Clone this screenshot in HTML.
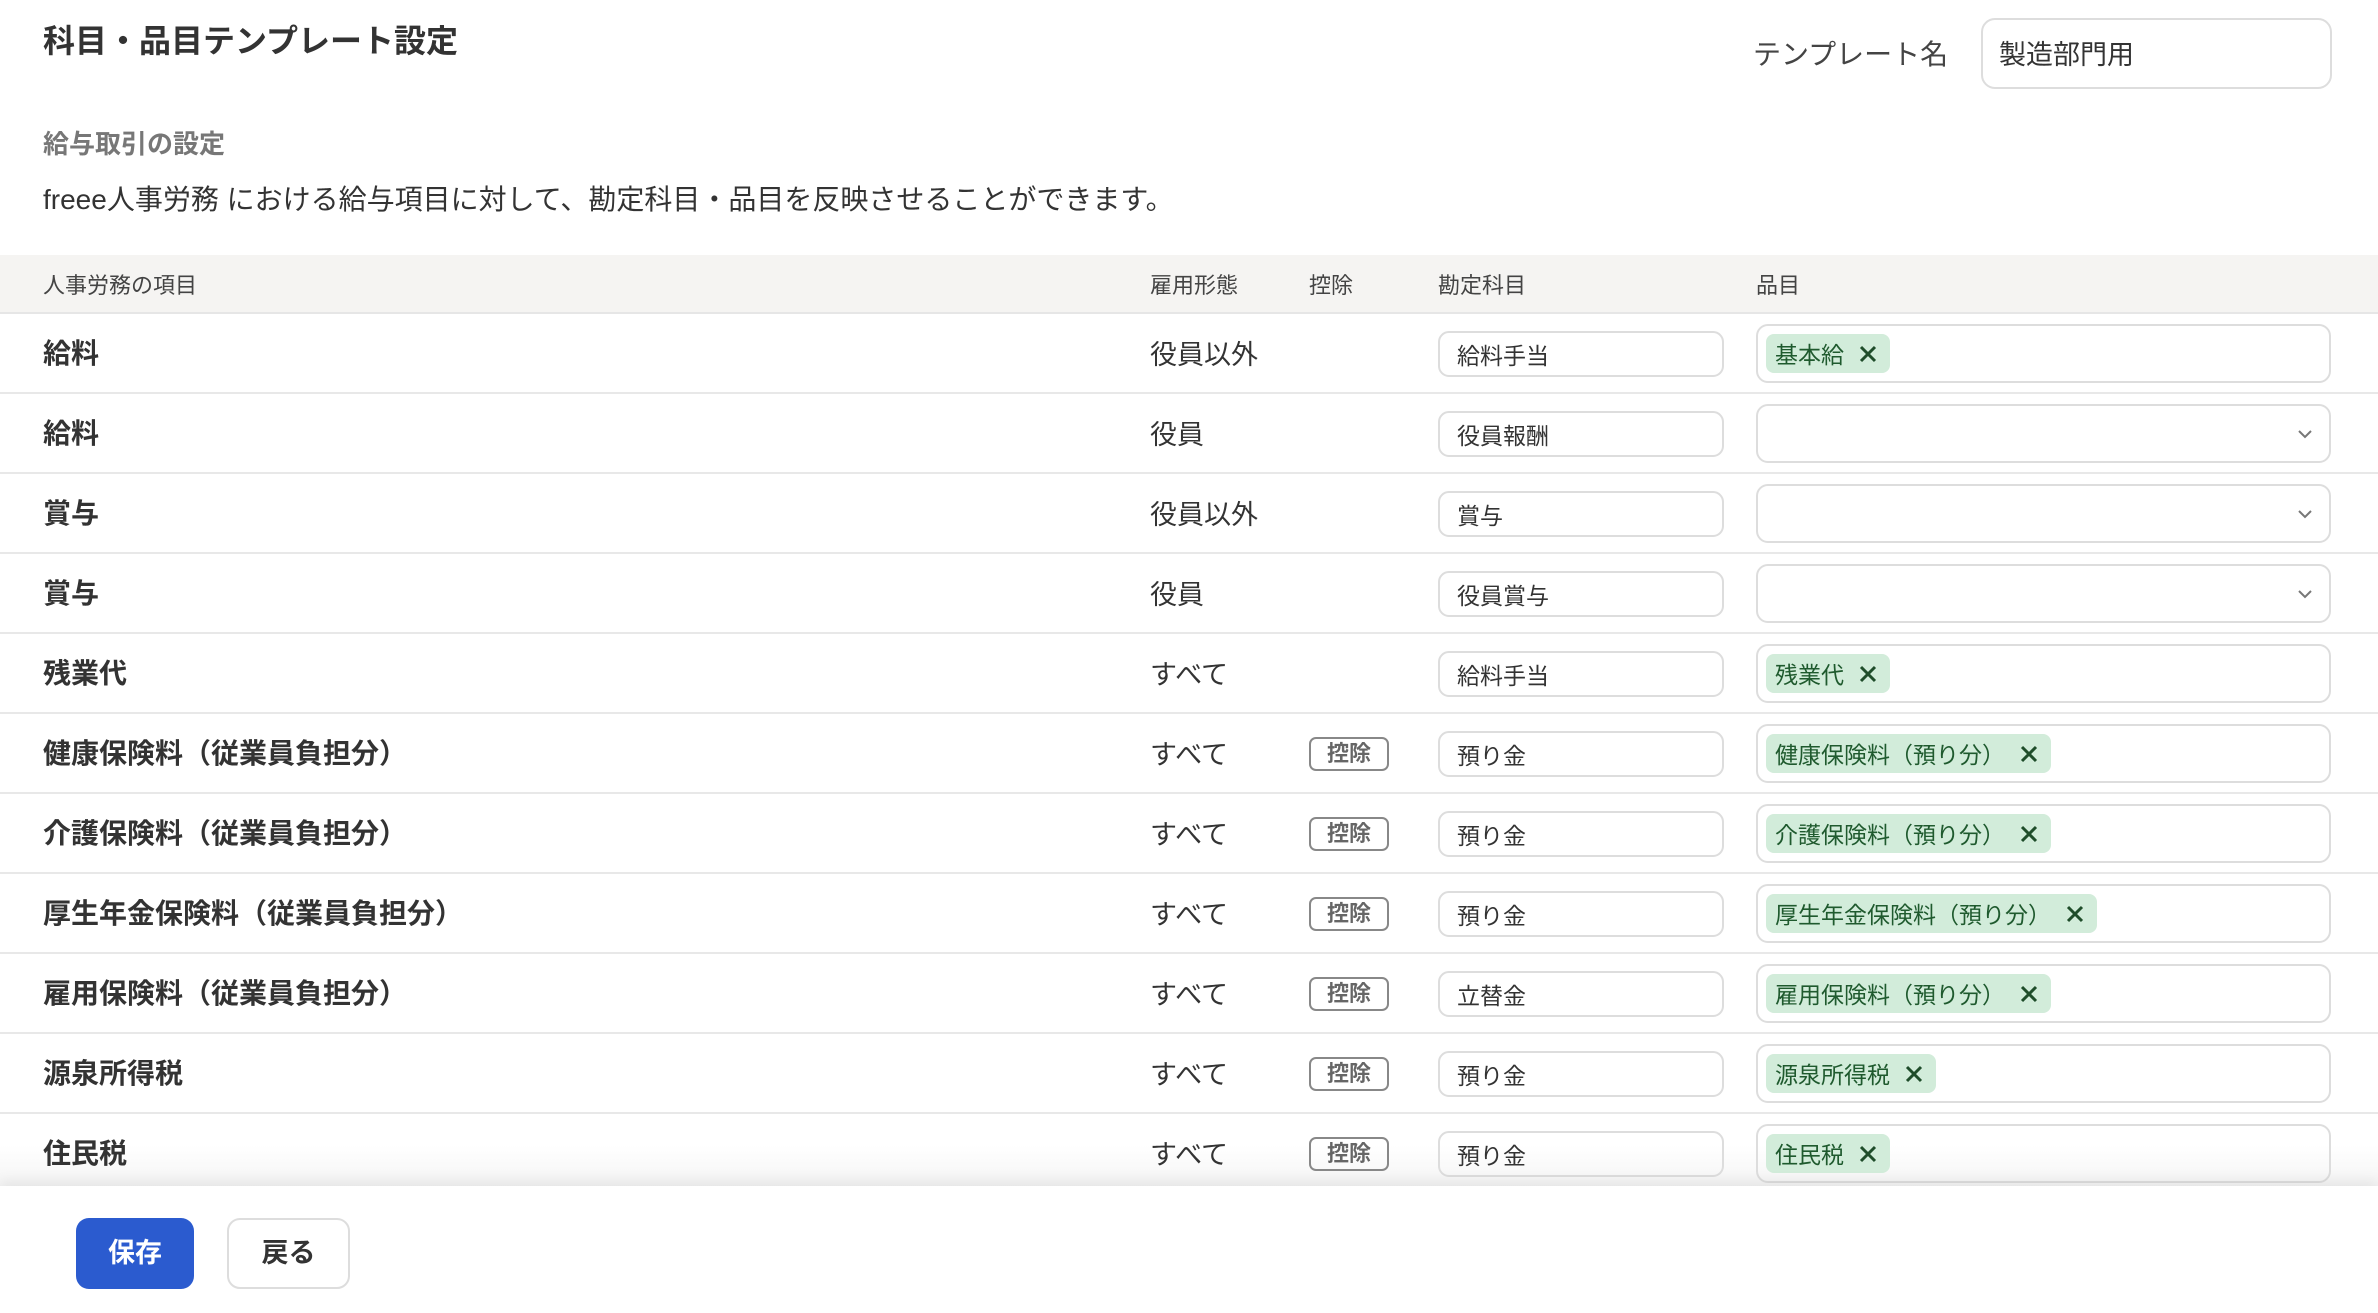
<!DOCTYPE html>
<html><head><meta charset="utf-8"><style>
*{box-sizing:border-box;margin:0;padding:0}
body{width:2378px;height:1313px;overflow:hidden;background:#fff;font-family:"Liberation Sans","Noto Sans CJK JP",sans-serif;color:#333;position:relative}
.abs{position:absolute}
h1{position:absolute;left:43px;top:16px;font-size:32px;font-weight:bold;color:#333}
.tl{left:1753px;top:33px;font-size:28px;color:#444}
.tin{left:1981px;top:18px;width:351px;height:71px;border:2px solid #ddd;border-radius:14px;font-size:27px;padding:13px 0 0 16px;color:#333}
.sub{left:43px;top:124px;font-size:26px;font-weight:bold;color:#777}
.desc{left:43px;top:178px;font-size:28px;color:#333}
.hdr{left:0;top:255px;width:2378px;height:59px;background:#f5f4f2;border-bottom:2px solid #e6e6e6;font-size:22px;color:#444}
.hdr span{position:absolute;top:13px}
.tbl{left:0;top:314px;width:2378px;height:872px;overflow:hidden}
.row{position:absolute;left:0;width:2378px;height:80px;border-bottom:2px solid #e8e8e8}
.nm{position:absolute;left:43px;top:18px;font-size:28px;font-weight:bold;color:#333}
.et{position:absolute;left:1150px;top:19px;font-size:27px;color:#333}
.bd{position:absolute;left:1309px;top:23px;width:80px;height:34px;border:2px solid #888;border-radius:7px;font-size:22px;font-weight:bold;color:#666;text-align:center;line-height:30px}
.ac{position:absolute;left:1438px;top:17px;width:286px;height:46px;border:2px solid #ddd;border-radius:11px;font-size:23px;padding:4px 0 0 17px;color:#333}
.it{position:absolute;left:1756px;top:10px;width:575px;height:59px;border:2px solid #ddd;border-radius:12px}
.tag{position:absolute;left:8px;top:8px;height:39px;background:#d2ecda;border-radius:8px;font-size:23px;color:#1f5a2e;padding:2px 0 0 9px;display:flex;white-space:nowrap}
.tag svg{margin:8px 12px 0 14px}
.chev{position:absolute;right:16px;top:20px}
.foot{left:0;top:1186px;width:2378px;height:127px;background:#fff;box-shadow:0 -6px 12px rgba(0,0,0,0.06)}
.b1{left:76px;top:1218px;width:118px;height:71px;background:#2b5bcf;border-radius:13px;color:#fff;font-size:27px;font-weight:bold;text-align:center;line-height:71px}
.b2{left:227px;top:1218px;width:123px;height:71px;border:2px solid #ddd;border-radius:13px;color:#333;font-size:27px;font-weight:bold;text-align:center;line-height:67px}
</style></head><body>
<h1>科目・品目テンプレート設定</h1>
<div class="abs tl">テンプレート名</div>
<div class="abs tin">製造部門用</div>
<div class="abs sub">給与取引の設定</div>
<div class="abs desc">freee人事労務 における給与項目に対して、勘定科目・品目を反映させることができます。</div>
<div class="abs hdr"><span style="left:43px">人事労務の項目</span><span style="left:1150px">雇用形態</span><span style="left:1309px">控除</span><span style="left:1438px">勘定科目</span><span style="left:1756px">品目</span></div>
<div class="abs tbl">
<div class="row" style="top:0"><div class="nm">給料</div><div class="et">役員以外</div><div class="ac">給料手当</div><div class="it"><div class="tag">基本給<svg width="20" height="20" viewBox="0 0 20 20"><path d="M3 3L17 17M17 3L3 17" stroke="#1f4d2a" stroke-width="3"/></svg></div></div></div>
<div class="row" style="top:80px"><div class="nm">給料</div><div class="et">役員</div><div class="ac">役員報酬</div><div class="it"><svg class="chev" width="16" height="16" viewBox="0 0 16 16"><path d="M2 5L8 11L14 5" stroke="#777" stroke-width="2" fill="none"/></svg></div></div>
<div class="row" style="top:160px"><div class="nm">賞与</div><div class="et">役員以外</div><div class="ac">賞与</div><div class="it"><svg class="chev" width="16" height="16" viewBox="0 0 16 16"><path d="M2 5L8 11L14 5" stroke="#777" stroke-width="2" fill="none"/></svg></div></div>
<div class="row" style="top:240px"><div class="nm">賞与</div><div class="et">役員</div><div class="ac">役員賞与</div><div class="it"><svg class="chev" width="16" height="16" viewBox="0 0 16 16"><path d="M2 5L8 11L14 5" stroke="#777" stroke-width="2" fill="none"/></svg></div></div>
<div class="row" style="top:320px"><div class="nm">残業代</div><div class="et">すべて</div><div class="ac">給料手当</div><div class="it"><div class="tag">残業代<svg width="20" height="20" viewBox="0 0 20 20"><path d="M3 3L17 17M17 3L3 17" stroke="#1f4d2a" stroke-width="3"/></svg></div></div></div>
<div class="row" style="top:400px"><div class="nm">健康保険料（従業員負担分）</div><div class="et">すべて</div><div class="bd">控除</div><div class="ac">預り金</div><div class="it"><div class="tag">健康保険料（預り分）<svg width="20" height="20" viewBox="0 0 20 20"><path d="M3 3L17 17M17 3L3 17" stroke="#1f4d2a" stroke-width="3"/></svg></div></div></div>
<div class="row" style="top:480px"><div class="nm">介護保険料（従業員負担分）</div><div class="et">すべて</div><div class="bd">控除</div><div class="ac">預り金</div><div class="it"><div class="tag">介護保険料（預り分）<svg width="20" height="20" viewBox="0 0 20 20"><path d="M3 3L17 17M17 3L3 17" stroke="#1f4d2a" stroke-width="3"/></svg></div></div></div>
<div class="row" style="top:560px"><div class="nm">厚生年金保険料（従業員負担分）</div><div class="et">すべて</div><div class="bd">控除</div><div class="ac">預り金</div><div class="it"><div class="tag">厚生年金保険料（預り分）<svg width="20" height="20" viewBox="0 0 20 20"><path d="M3 3L17 17M17 3L3 17" stroke="#1f4d2a" stroke-width="3"/></svg></div></div></div>
<div class="row" style="top:640px"><div class="nm">雇用保険料（従業員負担分）</div><div class="et">すべて</div><div class="bd">控除</div><div class="ac">立替金</div><div class="it"><div class="tag">雇用保険料（預り分）<svg width="20" height="20" viewBox="0 0 20 20"><path d="M3 3L17 17M17 3L3 17" stroke="#1f4d2a" stroke-width="3"/></svg></div></div></div>
<div class="row" style="top:720px"><div class="nm">源泉所得税</div><div class="et">すべて</div><div class="bd">控除</div><div class="ac">預り金</div><div class="it"><div class="tag">源泉所得税<svg width="20" height="20" viewBox="0 0 20 20"><path d="M3 3L17 17M17 3L3 17" stroke="#1f4d2a" stroke-width="3"/></svg></div></div></div>
<div class="row" style="top:800px;background:linear-gradient(#fff 40%,#f3f3f3)"><div class="nm">住民税</div><div class="et">すべて</div><div class="bd">控除</div><div class="ac">預り金</div><div class="it"><div class="tag">住民税<svg width="20" height="20" viewBox="0 0 20 20"><path d="M3 3L17 17M17 3L3 17" stroke="#1f4d2a" stroke-width="3"/></svg></div></div></div>
</div>
<div class="abs foot"></div>
<div class="abs b1">保存</div>
<div class="abs b2">戻る</div>
</body></html>
